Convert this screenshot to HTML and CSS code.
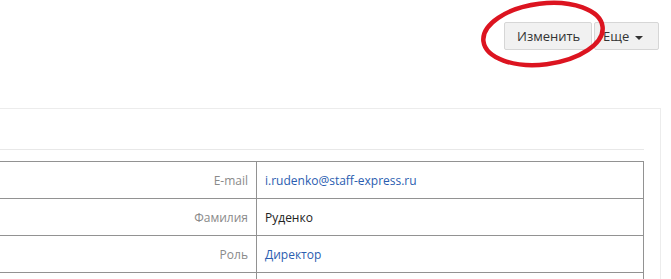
FILE: index.html
```html
<!DOCTYPE html>
<html lang="ru">
<head>
    <meta charset="UTF-8">
    <title>Пользователь</title>
    <link rel="stylesheet" href="styles.css">
</head>
<body>
    <div class="page">
        <div class="toolbar">
            <button class="btn">Изменить</button>
            <button class="btn">Еще <span class="caret"></span></button>
            <!-- hand drawn mark over the edit button -->
            <svg class="mark" width="140" height="76" viewBox="0 0 140 76">
                <ellipse cx="72" cy="34" rx="60" ry="30.5" transform="rotate(-7 72 34)" fill="none" stroke="#dc1420" stroke-width="4.5"/>
            </svg>
        </div>

        <div class="panel">
            <div class="panel-head"></div>
            <table class="info">
                <tr>
                    <th>E-mail</th>
                    <td><a href="#">i.rudenko@staff-express.ru</a></td>
                </tr>
                <tr>
                    <th>Фамилия</th>
                    <td>Руденко</td>
                </tr>
                <tr>
                    <th>Роль</th>
                    <td><a href="#">Директор</a></td>
                </tr>
                <tr>
                    <th>&nbsp;</th>
                    <td>&nbsp;</td>
                </tr>
            </table>
        </div>
    </div>
</body>
</html>
```

FILE: styles.css
```css
body {
    margin: 0;
    background: #ffffff;
    font-family: "Open Sans", "Liberation Sans", sans-serif;
    font-size: 13px;
    color: #222;
    overflow: hidden;
}

.page {
    padding-top: 22px;
}

.toolbar {
    position: relative;
    display: flex;
    justify-content: flex-end;
    gap: 2px;
    padding-right: 12px;
    height: 28px;
}

.btn {
    height: 28px;
    padding: 0 12px;
    border: 1px solid #d6d6d6;
    border-radius: 2px;
    background: #f1f1f1;
    color: #333;
    font-family: inherit;
    font-size: 13px;
    cursor: pointer;
}

.btn:first-of-type {
    width: 88px;
}

.btn:nth-of-type(2) {
    width: 65px;
    padding: 0 8px;
    text-align: left;
}

.caret {
    display: inline-block;
    width: 0;
    height: 0;
    margin-left: 2px;
    vertical-align: middle;
    border-top: 4px solid #333;
    border-left: 4px solid transparent;
    border-right: 4px solid transparent;
}

.mark {
    position: absolute;
    left: 471px;
    top: -22px;
}

.panel {
    margin: 58px 10px 0 -20px;
    border: 1px solid #ececec;
    border-bottom: none;
    padding: 0 16px 0 0;
}

.panel-head {
    height: 40px;
    border-bottom: 1px solid #e8e8e8;
    margin-bottom: 11px;
}

.info {
    width: 100%;
    border-collapse: collapse;
    font-size: 12px;
}

.info th,
.info td {
    height: 36px;
    border: 1px solid #929292;
    padding: 0 8px;
}

.info th {
    width: 258px;
    text-align: right;
    font-weight: normal;
    color: #8a8a8a;
}

.info td {
    text-align: left;
    color: #222;
}

.info a {
    color: #2a5db0;
    text-decoration: none;
}
```
